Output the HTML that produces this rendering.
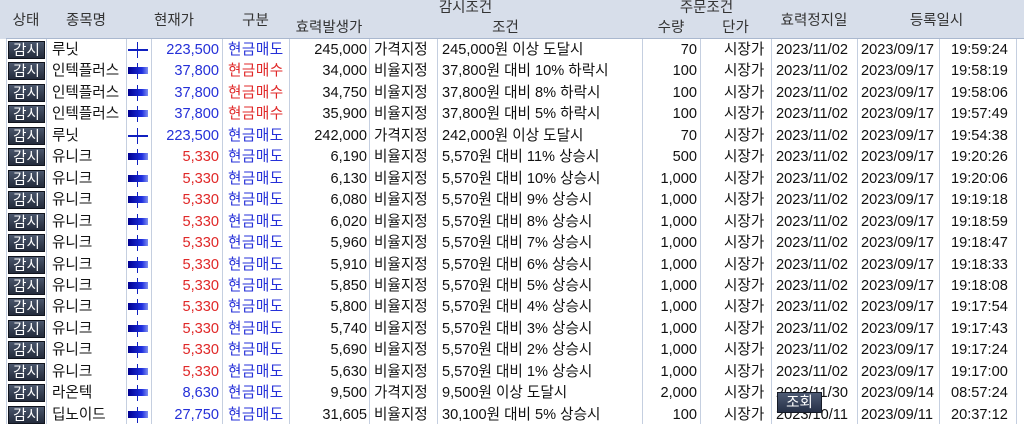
<!DOCTYPE html>
<html><head><meta charset="utf-8"><style>
body{margin:0;width:1024px;height:424px;overflow:hidden;background:#fff;font-family:"Liberation Sans","Noto Sans CJK KR",sans-serif;font-size:14.6px;color:#111;position:relative}
.h{position:absolute;background:#d7deea;border-right:1px solid #aab8cf;border-bottom:1px solid #aab8cf;box-sizing:border-box;text-align:center;color:#333;font-size:14.5px}
.vl{position:absolute;top:39px;bottom:0;width:1px;background:#c5cfe0}
.r{position:absolute;left:0;width:1024px;height:21.45px;line-height:23px}
.r span{position:absolute;top:0;white-space:nowrap}
.b{left:8px;top:2px!important;width:37px;height:18px;line-height:18px!important;background:linear-gradient(#4a566c,#232b3b);color:#fff;text-align:center;font-size:14.5px;border:1px solid #11151f;box-sizing:border-box}
.R{text-align:right}.bl{color:#2530d8}.rd{color:#e02828}
.sp{position:absolute;left:128px;width:20px}
</style></head><body>
<div class="h" style="left:0;top:0;width:7px;height:39px;border-bottom:none"></div>
<div class="h" style="left:6px;top:0;width:41px;height:39px;line-height:42px">상태</div>
<div class="h" style="left:46px;top:0;width:81px;height:39px;line-height:42px">종목명</div>
<div class="h" style="left:126px;top:0;width:97px;height:39px;line-height:42px">현재가</div>
<div class="h" style="left:222px;top:0;width:68px;height:39px;line-height:42px">구분</div>
<div class="h" style="left:289px;top:0;width:354px;height:18px;line-height:16px">감시조건</div>
<div class="h" style="left:289px;top:17px;width:81px;height:22px;line-height:23px">효력발생가</div>
<div class="h" style="left:369px;top:17px;width:274px;height:22px;line-height:23px">조건</div>
<div class="h" style="left:642px;top:0;width:130px;height:18px;line-height:16px">주문조건</div>
<div class="h" style="left:642px;top:17px;width:59px;height:22px;line-height:23px">수량</div>
<div class="h" style="left:700px;top:17px;width:72px;height:22px;line-height:23px">단가</div>
<div class="h" style="left:771px;top:0;width:87px;height:39px;line-height:42px">효력정지일</div>
<div class="h" style="left:857px;top:0;width:160px;height:39px;line-height:42px">등록일시</div>
<div class="h" style="left:1016px;top:0;width:8px;height:39px;border-right:none"></div>
<div class="vl" style="left:6px"></div><div class="vl" style="left:46px"></div><div class="vl" style="left:126px"></div><div class="vl" style="left:151px"></div><div class="vl" style="left:222px"></div><div class="vl" style="left:289px"></div><div class="vl" style="left:369px"></div><div class="vl" style="left:437px"></div><div class="vl" style="left:642px"></div><div class="vl" style="left:700px"></div><div class="vl" style="left:771px"></div><div class="vl" style="left:857px"></div><div class="vl" style="left:939px"></div><div class="vl" style="left:1016px"></div>
<div id="rows"></div>
<div style="position:absolute;left:777px;top:392px;width:45px;height:21px;background:linear-gradient(#4d5a73,#263047);color:#fff;text-align:center;line-height:21px;font-size:14.5px;border:1px solid #151a26;box-sizing:border-box">조회</div>
<script>
var d=[
["루닛","223,500","bl","현금매도","bl","245,000","가격지정","245,000원 이상 도달시","70","2023/11/02","2023/09/17","19:59:24",1],
["인텍플러스","37,800","bl","현금매수","rd","34,000","비율지정","37,800원 대비 10% 하락시","100","2023/11/02","2023/09/17","19:58:19",0],
["인텍플러스","37,800","bl","현금매수","rd","34,750","비율지정","37,800원 대비 8% 하락시","100","2023/11/02","2023/09/17","19:58:06",0],
["인텍플러스","37,800","bl","현금매수","rd","35,900","비율지정","37,800원 대비 5% 하락시","100","2023/11/02","2023/09/17","19:57:49",0],
["루닛","223,500","bl","현금매도","bl","242,000","가격지정","242,000원 이상 도달시","70","2023/11/02","2023/09/17","19:54:38",1]];
var u=[["6,190","11","500","19:20:26"],["6,130","10","1,000","19:20:06"],["6,080","9","1,000","19:19:18"],["6,020","8","1,000","19:18:59"],["5,960","7","1,000","19:18:47"],["5,910","6","1,000","19:18:33"],["5,850","5","1,000","19:18:08"],["5,800","4","1,000","19:17:54"],["5,740","3","1,000","19:17:43"],["5,690","2","1,000","19:17:24"],["5,630","1","1,000","19:17:00"]];
u.forEach(function(x){d.push(["유니크","5,330","rd","현금매도","bl",x[0],"비율지정","5,570원 대비 "+x[1]+"% 상승시",x[2],"2023/11/02","2023/09/17",x[3],0])});
d.push(["라온텍","8,630","bl","현금매도","bl","9,500","가격지정","9,500원 이상 도달시","2,000","2023/11/30","2023/09/14","08:57:24",0]);
d.push(["딥노이드","27,750","bl","현금매도","bl","31,605","비율지정","30,100원 대비 5% 상승시","100","2023/10/11","2023/09/11","20:37:12",0]);
var h="";
d.forEach(function(r,i){var t=39+i*21.45;
var sp=r[12]?'<span class="sp" style="top:10px;height:2px;background:#1020c0"></span>':'<span class="sp" style="top:7px;height:7px;background:linear-gradient(90deg,#000090,#2030e0 70%,#8090f0)"></span>';
h+='<div class="r" style="top:'+t+'px"><span class="b">감시</span><span style="left:52px">'+r[0]+'</span>'+sp+'<span style="left:137px;top:3px;width:1px;height:16px;background:#1020c0"></span>'+
'<span class="R '+r[2]+'" style="right:805px">'+r[1]+'</span><span class="'+r[4]+'" style="left:228px;letter-spacing:0.5px">'+r[3]+'</span>'+
'<span class="R" style="right:657px">'+r[5]+'</span><span style="left:374px">'+r[6]+'</span><span style="left:442px">'+r[7]+'</span>'+
'<span class="R" style="right:327px">'+r[8]+'</span><span style="left:724px">시장가</span><span style="left:776px">'+r[9]+'</span><span style="left:861px">'+r[10]+'</span><span style="left:951px">'+r[11]+'</span></div>';});
document.getElementById("rows").innerHTML=h;
</script>
</body></html>
